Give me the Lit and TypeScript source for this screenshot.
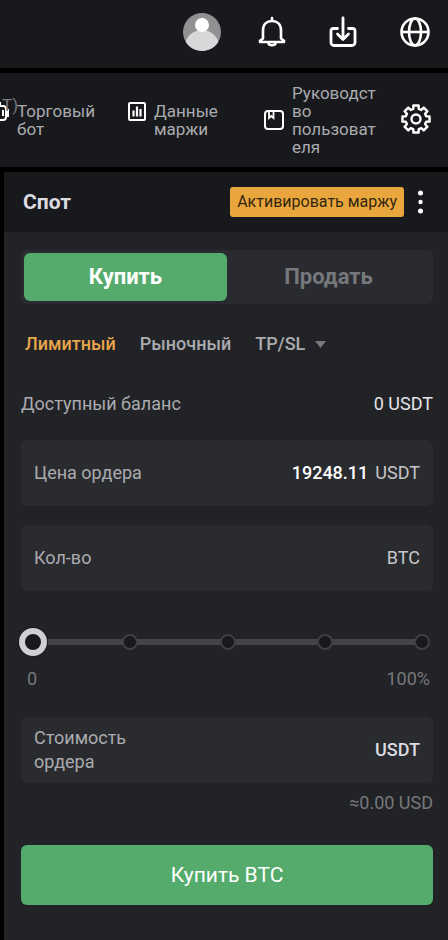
import { LitElement, html, css } from "lit";
import { customElement, state } from "lit/decorators.js";

/** Outline of an eight-toothed cog centred on (cx, cy). */
function cog(cx: number, cy: number, inner: number, outer: number): string {
  const points: string[] = [];
  for (let i = 0; i < 8; i++) {
    for (const [shift, radius] of [[-15, inner], [-11, outer], [11, outer], [15, inner]]) {
      const angle = ((i * 45 + shift) * Math.PI) / 180;
      points.push(`${(cx + radius * Math.cos(angle)).toFixed(2)} ${(cy + radius * Math.sin(angle)).toFixed(2)}`);
    }
  }
  return `M${points.join("L")}Z`;
}

@customElement("app-root")
class AppRoot extends LitElement {
  static styles = css`
    :host {
      display: flex;
      flex-direction: column;
      gap: 5px;
      min-height: 100vh;
      background: #000;
      color: #aaabaf;
      font-family: Roboto, "Noto Sans", sans-serif;
      font-size: 18px;
      line-height: 24px;
    }
    * { box-sizing: border-box; }
    button, input, select {
      margin: 0;
      padding: 0;
      border: 0;
      background: none;
      color: inherit;
      font: inherit;
      outline: none;
    }
    button { cursor: pointer; }
    svg { display: block; flex: none; }
    .top {
      display: flex;
      justify-content: flex-end;
      align-items: center;
      gap: 35px;
      height: 68px;
      padding: 0 16px 4px 0;
      background: #18191c;
      color: #fff;
    }
    .nav {
      display: flex;
      align-items: center;
      height: 94px;
      padding-right: 16px;
      background: #18191c;
      overflow: hidden;
      font-size: 17px;
      line-height: 18px;
    }
    .item {
      display: flex;
      align-items: flex-start;
      gap: 8px;
      color: inherit;
      text-decoration: none;
    }
    .item svg, .gear { color: #fff; }
    .bot { position: relative; width: 137px; margin-left: -9px; }
    .cut {
      position: absolute;
      top: -6px;
      left: 11px;
      color: #77787c;
    }
    .data { width: 136px; }
    .guide { align-items: center; }
    .guide .label { width: 88px; overflow-wrap: anywhere; }
    .gear { margin-left: auto; }
    .panel {
      flex: 1;
      margin-left: 4px;
      background: #222327;
    }
    .head {
      display: flex;
      align-items: center;
      height: 60px;
      padding: 0 23px 0 19px;
      background: #18191c;
    }
    .title {
      flex: 1;
      margin: 0;
      color: #dcdce0;
      font-size: 21px;
      font-weight: 700;
    }
    .margin {
      height: 30px;
      padding: 0 7px;
      border-radius: 3px;
      background: #e9a63c;
      color: #33260f;
      font-size: 16px;
    }
    .more { margin-left: 12px; color: #fff; }
    .body { padding: 18px 15px 36px 17px; }
    .sides {
      display: grid;
      grid-template-columns: 1fr 1fr;
      height: 54px;
      padding: 3px;
      border-radius: 6px;
      background: #2a2b30;
    }
    .side {
      border-radius: 6px;
      color: #77787c;
      font-size: 22px;
      font-weight: 700;
    }
    .side.on { background: #55ab6c; color: #fff; }
    .types {
      display: flex;
      gap: 24px;
      margin-top: 28px;
      padding-left: 4px;
      font-weight: 500;
    }
    .type.on { color: #e8a54b; }
    .plan { display: flex; align-items: center; color: #77787c; }
    .plan select { width: 60px; appearance: none; color: #aaabaf; }
    .balance {
      display: flex;
      justify-content: space-between;
      margin: 36px 0 24px;
    }
    .amount { color: #e4e4e8; }
    .field {
      display: flex;
      align-items: center;
      gap: 7px;
      height: 66px;
      padding: 0 13px;
      border-radius: 6px;
      background: #2a2b2f;
    }
    .field + .field { margin-top: 19px; }
    .field label { width: 120px; }
    .field input {
      flex: 1;
      min-width: 0;
      color: #fff;
      font-weight: 500;
      text-align: right;
    }
    .unit { color: #c6c6ca; }
    .unit.strong { color: #dcdce0; font-weight: 500; }
    .slider {
      position: relative;
      height: 28px;
      margin: 37px 3px 0 4px;
    }
    .ticks {
      display: flex;
      justify-content: space-between;
      align-items: center;
      height: 28px;
      background: linear-gradient(#444549, #444549) center / calc(100% - 16px) 6px no-repeat;
    }
    .tick {
      width: 16px;
      height: 16px;
      border: 2px solid #3e3f43;
      border-radius: 50%;
      background: #18191c;
    }
    .range {
      position: absolute;
      top: 0;
      left: -6px;
      width: calc(100% + 12px);
      height: 28px;
      appearance: none;
    }
    .range::-webkit-slider-thumb {
      appearance: none;
      width: 28px;
      height: 28px;
      border: 6px solid #cfd0d4;
      border-radius: 50%;
      background: #18191c;
      box-shadow: 0 0 0 1px #18191c;
    }
    .scale {
      display: flex;
      justify-content: space-between;
      margin: 11px 3px 26px 6px;
      color: #77787c;
    }
    .approx {
      margin: 8px 0 30px;
      color: #77787c;
      text-align: right;
    }
    .buy {
      display: block;
      width: 100%;
      height: 60px;
      border-radius: 6px;
      background: #55ab6c;
      color: #fff;
      font-size: 21px;
    }
  `;

  @state() private side = "buy";
  @state() private type = "limit";

  render() {
    return html`
      <header class="top">
        <button aria-label="Профиль">
          <svg width="38" height="38" viewBox="0 0 38 38">
            <defs><clipPath id="face"><circle cx="19" cy="19" r="19" /></clipPath></defs>
            <g clip-path="url(#face)">
              <rect width="38" height="38" fill="#919193" />
              <ellipse cx="19" cy="33" rx="17" ry="16" fill="#d8d8da" />
              <circle cx="19" cy="12" r="7" fill="#fff" />
            </g>
          </svg>
        </button>
        <button aria-label="Уведомления">
          <svg width="32" height="34" viewBox="0 0 32 34" fill="none" stroke="currentColor" stroke-width="2.6" stroke-linecap="round" stroke-linejoin="round">
            <path d="M16 3v3M7 23.500V15.500C7 9.500 10.800 6 16 6s9 3.500 9 9.500V23.500l3 2.200V27H4v-1.300zM12.500 28.500c.6 2.400 6.400 2.400 7 0" />
          </svg>
        </button>
        <button aria-label="Скачать">
          <svg width="40" height="34" viewBox="0 0 40 34" fill="none" stroke="currentColor" stroke-width="2.800" stroke-linecap="round" stroke-linejoin="round">
            <path d="M14.500 13.500h-4a2.500 2.500 0 0 0-2.500 2.500v11.500a3 3 0 0 0 3 3h18a3 3 0 0 0 3-3v-11.500a2.500 2.500 0 0 0-2.500-2.500h-4M20 3v21M14.500 19l5.500 5.500 5.500-5.500" />
          </svg>
        </button>
        <button aria-label="Язык">
          <svg width="34" height="34" viewBox="0 0 34 34" fill="none" stroke="currentColor" stroke-width="2.600">
            <circle cx="17" cy="17" r="13.500" />
            <ellipse cx="17" cy="17" rx="6" ry="13.500" />
            <path d="M3.500 17h27" />
          </svg>
        </button>
      </header>

      <nav class="nav">
        <a class="item bot" href="#bot">
          <svg width="18" height="20" viewBox="0 0 18 20" fill="none" stroke="currentColor" stroke-width="2">
            <path d="M9 0v4M4 4h8a3 3 0 0 1 3 3v8a3 3 0 0 1-3 3H4M12 8v6M15 8h2v6h-2" />
          </svg>
          <span class="cut" aria-hidden="true">T)</span>
          <span class="label">Торговый<br />бот</span>
        </a>
        <a class="item data" href="#data">
          <svg width="18" height="19" viewBox="0 0 18 19" fill="none" stroke="currentColor" stroke-width="2">
            <rect x="1" y="1" width="16" height="17" rx="1" />
            <path d="M5.500 8.500v6M9 4.500v10M12.500 7v7.500" stroke-width="2.200" />
          </svg>
          <span class="label">Данные<br />маржи</span>
        </a>
        <a class="item guide" href="#guide">
          <svg width="20" height="20" viewBox="0 0 20 20" fill="none" stroke="currentColor" stroke-width="2">
            <rect x="1" y="1" width="18" height="18" rx="3" />
            <path d="M5 1v7l2.200-2 2.300 2V1" stroke-width="1.800" />
          </svg>
          <span class="label">Руководство пользователя</span>
        </a>
        <button class="gear" aria-label="Настройки">
          <svg width="32" height="32" viewBox="0 0 32 32" fill="none" stroke="currentColor" stroke-width="2.400" stroke-linejoin="round">
            <path d=${cog(16, 15, 10.5, 13.8)} />
            <circle cx="16" cy="15" r="4.500" />
          </svg>
        </button>
      </nav>

      <main class="panel">
        <div class="head">
          <h1 class="title">Спот</h1>
          <button class="margin">Активировать маржу</button>
          <button class="more" aria-label="Ещё">
            <svg width="9" height="28" viewBox="0 0 9 28" fill="currentColor">
              <circle cx="4.500" cy="5" r="2.500" /><circle cx="4.500" cy="14" r="2.200" /><circle cx="4.500" cy="23" r="2.500" />
            </svg>
          </button>
        </div>
        <div class="body">
          <div class="sides">
            <button class="side ${this.side === "buy" ? "on" : ""}" @click=${() => (this.side = "buy")}>Купить</button>
            <button class="side ${this.side === "sell" ? "on" : ""}" @click=${() => (this.side = "sell")}>Продать</button>
          </div>
          <div class="types">
            <button class="type ${this.type === "limit" ? "on" : ""}" @click=${() => (this.type = "limit")}>Лимитный</button>
            <button class="type ${this.type === "market" ? "on" : ""}" @click=${() => (this.type = "market")}>Рыночный</button>
            <div class="plan">
              <select aria-label="Условный ордер"><option>TP/SL</option></select>
              <svg width="11" height="7" viewBox="0 0 11 7" fill="currentColor"><path d="M0 0h11L5.500 7z" /></svg>
            </div>
          </div>
          <div class="balance"><span>Доступный баланс</span><span class="amount">0 USDT</span></div>
          <div class="field">
            <label for="price">Цена ордера</label>
            <input id="price" inputmode="decimal" value="19248.11" />
            <span class="unit">USDT</span>
          </div>
          <div class="field">
            <label for="qty">Кол-во</label>
            <input id="qty" inputmode="decimal" />
            <span class="unit">BTC</span>
          </div>
          <div class="slider">
            <div class="ticks">${[0, 25, 50, 75, 100].map(() => html`<span class="tick"></span>`)}</div>
            <input class="range" type="range" min="0" max="100" value="0" aria-label="Доля баланса" />
          </div>
          <div class="scale"><span>0</span><span>100%</span></div>
          <div class="field">
            <label for="cost">Стоимость ордера</label>
            <input id="cost" inputmode="decimal" />
            <span class="unit strong">USDT</span>
          </div>
          <div class="approx">≈0.00 USD</div>
          <button class="buy">Купить BTC</button>
        </div>
      </main>
    `;
  }
}
